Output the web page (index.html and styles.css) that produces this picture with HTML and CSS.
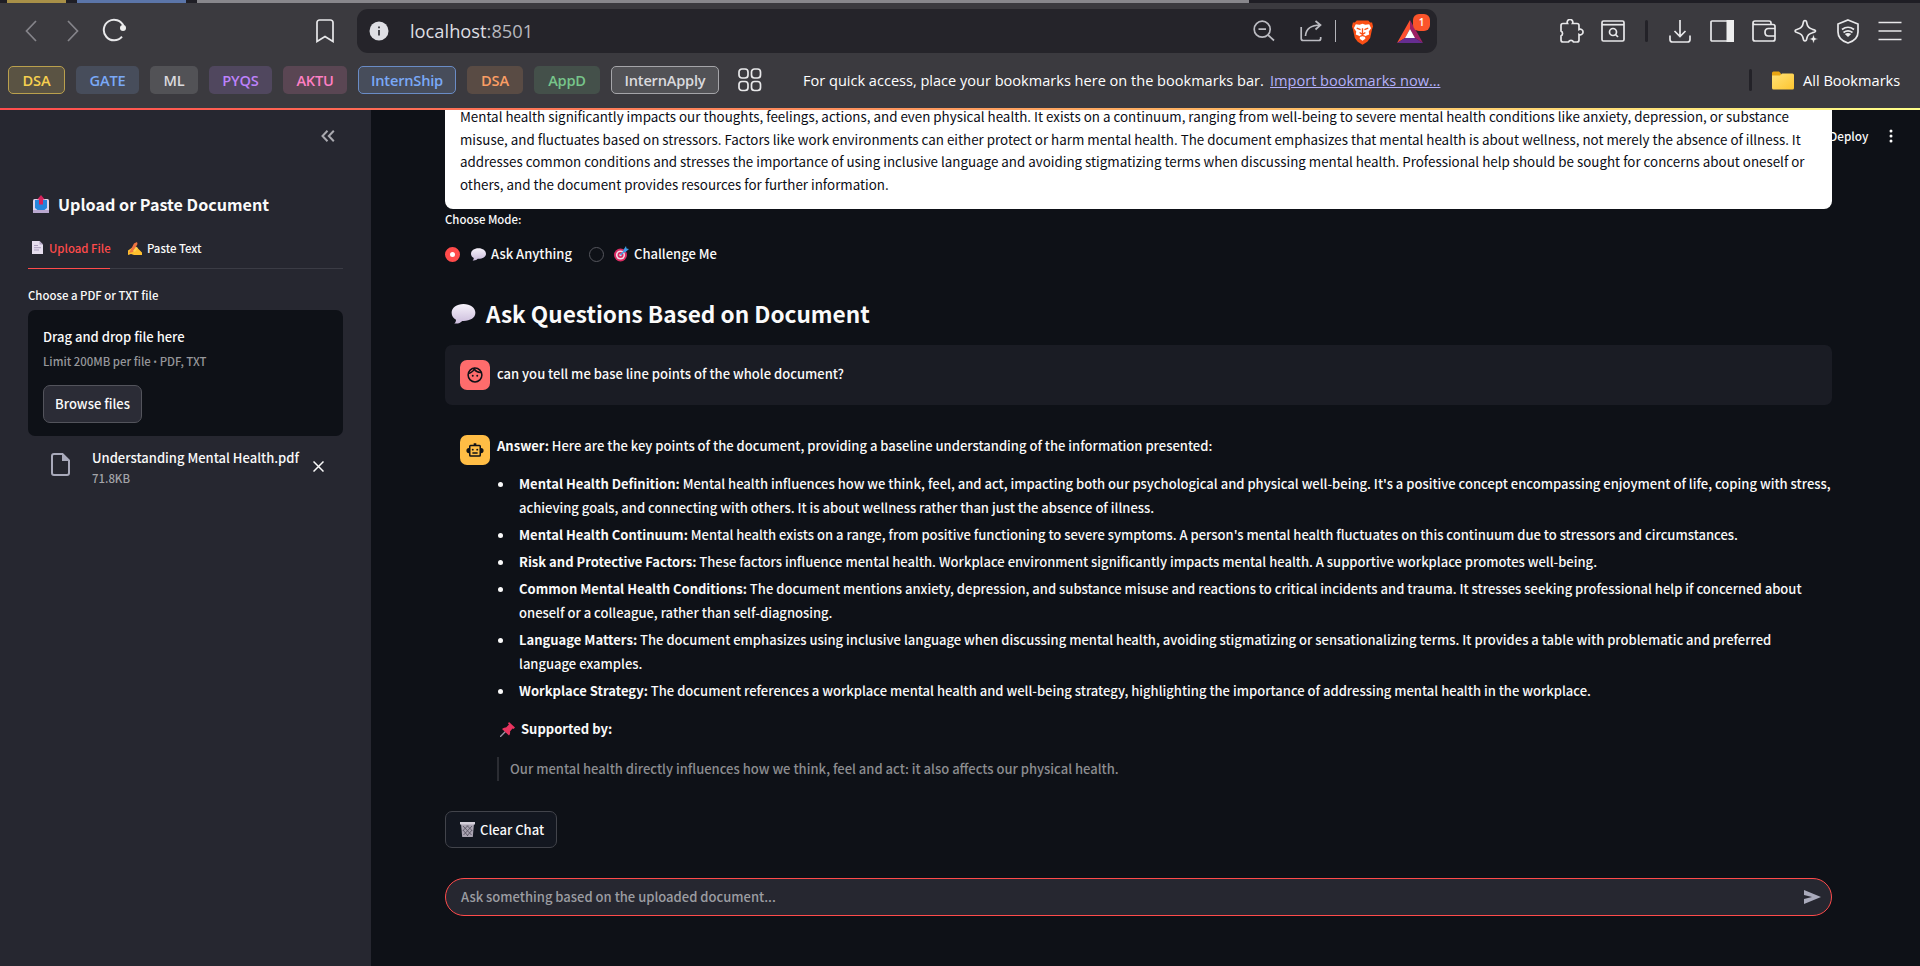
FILE: index.html
```
<!DOCTYPE html>
<html lang="en">
<head>
<meta charset="utf-8">
<title>localhost:8501</title>
<link rel="stylesheet" href="styles.css">
</head>
<body>
<header class="chrome">
  <div class="tabstrip"><i class="tab yellow"></i><i class="tab blue"></i><i class="tab gray"></i></div>
  <div class="toolbar">
    <div class="nav">
      <svg class="dim" width="12" height="22" viewBox="0 0 12 22"><path d="M11 1 1.500 11 11 21"/></svg>
      <svg class="dim fwd" width="12" height="22" viewBox="0 0 12 22"><path d="M1 1 10.500 11 1 21"/></svg>
      <svg class="reload" width="26" height="26" viewBox="0 0 26 26"><path d="M20 18.600A10.300 10.300 0 1 1 21.600 8"/><circle cx="21" cy="10" r="3" class="fill"/></svg>
      <svg class="mark" width="18" height="24" viewBox="0 0 18 24"><path d="M1 3.500A2.500 2.500 0 0 1 3.500 1h11A2.500 2.500 0 0 1 17 3.500V22.500L9 17.500 1 22.500Z"/></svg>
    </div>
    <div class="omnibox">
      <svg width="20" height="20" viewBox="0 0 20 20"><circle cx="10" cy="10" r="9.500" fill="#dfdfe4" stroke="none"/><path d="M10 9v5.500M10 5.500v1.800" stroke="#39393f" stroke-width="1.800"/></svg>
      <span class="url">localhost<span>:8501</span></span>
      <svg class="soft zoomout" width="22" height="22" viewBox="0 0 22 22"><circle cx="9.200" cy="9.200" r="8"/><path d="m15 15 6 5.500M5.500 9.200h7.500"/></svg>
      <svg class="soft share" width="23" height="22" viewBox="0 0 23 22"><path d="M1.200 7v11.500a2 2 0 0 0 2 2h15.500a2 2 0 0 0 2-2V17M5.500 16C6 9 10 5 20.500 5M15.500 1l5 4-5 4.500"/></svg>
      <i class="sep"></i>
      <svg class="brave" width="23" height="26" viewBox="0 0 24 26"><path d="M6 1h12l2 2 2 .2 1 4-1 3-2 9-3 4-5 3-5-3-3-4-2-9-1-3 1-4 2-.2Z" fill="#fb4f15" stroke="none"/><path d="m5 5 4 .5 3-1 3 1L19 5l2 4-2.500 3.500.5 3-4.500 2L15 20l-3 2.200L9 20l.5-2.500L5 15.500l.5-3L3 9Z" fill="#fff" stroke="none"/><path d="m6 9 4 1.500M18 9l-4 1.500M12 9v6m-3-1.500 3 2 3-2M9.500 17.500l2.500-1 2.500 1" stroke="#fb4f15" stroke-width="1.400"/></svg>
      <span class="bat"><svg width="26" height="23" viewBox="0 0 26 23"><g stroke="none"><path d="M13 0 0 23l8-5 5-9Z" fill="#ff5030"/><path d="m13 0 13 23-8-5-5-9Z" fill="#9e1f63"/><path d="M0 23h26l-8-5H8Z" fill="#662d91"/><path d="m13 9 5 9H8Z" fill="#fff"/></g></svg><b>1</b></span>
    </div>
    <div class="tools">
      <svg width="25" height="25" viewBox="0 0 25 25"><path d="M2 6.500Q2 4.500 4 4.500H8.500A2.800 2.800 0 1 1 13.500 4.500H18Q20 4.500 20 6.500V10.500A2.800 2.800 0 1 1 20 15.500V21Q20 23 18 23H14.500A2.800 2.800 0 0 0 9.500 23H4Q2 23 2 21V17A2.800 2.800 0 0 0 2 12Z"/></svg>
      <svg class="g1" width="24" height="22" viewBox="0 0 24 22"><rect x="1" y="1" width="22" height="20" rx="1.500"/><path d="M1 4.700h22"/><circle cx="12" cy="12" r="3.500"/><path d="m14.500 14.500 2.500 2.500"/></svg>
      <i class="bar"></i>
      <svg class="g2" width="22" height="23" viewBox="0 0 22 23"><path d="M11 0v16M5.500 11l5.500 5.500 5.500-5.500M1 15.500v4q0 2.500 2.500 2.500h15q2.500 0 2.500-2.500v-4"/></svg>
      <svg class="g3" width="24" height="22" viewBox="0 0 24 22"><rect x="1" y="1" width="22" height="20" rx="1"/><path d="M16.500 0H24v22h-7.500Z" fill="#eee" stroke="none"/></svg>
      <svg class="g4" width="24" height="22" viewBox="0 0 24 22"><path d="M19 4.500V3Q19 1 17 1H3Q1 1 1 3V19q0 2 2 2H21q2 0 2-2V6.500q0-2-2-2H3Q1 4.500 1 3M23 8.500H16.500Q13 8.500 13 12.300T16.500 16H23"/></svg>
      <svg class="g5" width="24" height="25" viewBox="0 0 24 25"><path d="M11 1.500Q12.500 1.500 12.800 4 13.500 9 18.500 10.300 21.500 11 21.500 12T18.500 13.700Q13.500 15 12.800 19.500 12.500 22 11 22T9.200 19.500Q8.500 15 3.500 13.700 1 13 1 12T3.500 10.300Q8.500 9 9.200 4 9.500 1.500 11 1.500Z"/><path d="m19.500 15 1.300 3.700 3.700 1.300-3.700 1.300-1.300 3.700-1.300-3.700-3.700-1.300 3.700-1.300Z" fill="#eee" stroke="#3b3a3f" stroke-width=".8"/></svg>
      <svg class="g6" width="22" height="25" viewBox="0 0 22 25"><path d="m11 1 10 4v8q0 8-10 11Q1 21 1 13V5Z"/><path d="M5 10.500q6-4.500 12 0M6.500 13.500q4.500-3.200 9 0"/><path d="M7.800 15q3.200-2 6.400 0L11 18Z" fill="#eee" stroke="none"/></svg>
      <svg class="g7" width="24" height="20" viewBox="0 0 24 20"><path d="M.5 1.500h23M.5 10h23M.5 18.500h23"/></svg>
    </div>
  </div>
  <div class="bookmarks">
    <span class="chip c-yellow ring">DSA</span><span class="chip c-blue w2">GATE</span><span class="chip c-gray w3">ML</span><span class="chip c-purple w4">PYQS</span><span class="chip c-pink w5">AKTU</span><span class="chip c-blue ring w6">InternShip</span><span class="chip c-orange w7">DSA</span><span class="chip c-green w8">AppD</span><span class="chip c-gray ring w9">InternApply</span>
    <svg class="grid" width="24" height="24" viewBox="0 0 24 24"><rect x="1" y="1" width="9" height="9" rx="3"/><rect x="13.500" y="1" width="9" height="9" rx="3"/><rect x="1" y="13.500" width="9" height="9" rx="3"/><rect x="13.500" y="13.500" width="9" height="9" rx="3"/></svg>
    <span class="hint">For quick access, place your bookmarks here on the bookmarks bar.</span>
    <a class="import">Import bookmarks now...</a>
    <i class="bar"></i>
    <svg class="folder" width="22" height="19" viewBox="0 0 22 19"><defs><linearGradient id="fg" x1="0" y1="0" x2="1" y2="1"><stop offset="0" stop-color="#ffe277"/><stop offset="1" stop-color="#fdc52f"/></linearGradient></defs><path d="M0 2Q0 .5 1.500.5H7l2 2v4H0Z" fill="#e8a512" stroke="none"/><path d="M0 4.500 8 4.500 10 2.500H20.500Q22 2.500 22 4V17Q22 18.500 20.500 18.500H1.500Q0 18.500 0 17Z" fill="url(#fg)" stroke="none"/></svg>
    <span class="all">All Bookmarks</span>
  </div>
</header>
<div class="app">
  <aside class="sidebar">
    <svg class="collapse" width="14" height="12" viewBox="0 0 14 12"><path d="M6.500.8 1.500 6l5 5.200M12.800.8 7.800 6l5 5.200"/></svg>
    <h3><svg width="16" height="18" viewBox="0 0 16 18"><rect y="4" width="16" height="14" rx="1.500" fill="#dcd4ea" stroke="none"/><path d="M2 5h12v8l-2.500 2h-7L2 13Z" fill="#2484dc" stroke="none"/><path d="M0 15h16v3H0Z" fill="#b9a8cf" stroke="none"/><path d="M8 0 11.800 4.500H10V9.500H6V4.500H4.200Z" fill="#d6245c" stroke="none"/></svg><span>Upload or Paste Document</span></h3>
    <div class="tabs">
      <span class="on"><svg width="11" height="13" viewBox="0 0 11 13"><path d="M0 0h7.500L11 3.500V13H0Z" fill="#e6deee" stroke="none"/><path d="M7.500 0v3.500H11Z" fill="#b3a6c4" stroke="none"/><path d="M2 4.500h4M2 6.700h7M2 9h5" stroke="#a496b8" stroke-width=".9"/></svg>Upload File</span>
      <span class="off"><svg width="14" height="13" viewBox="0 0 14 13"><path d="M0 13V8.500L5 5l3-.5 6 6V13H6l-3-1Z" fill="#ffbf2e" stroke="none"/><path d="M1 11 6 1.500 9 0l.5 2L5 10Z" fill="#ee7440" stroke="none"/><path d="m5 9 3-4 2 1-3 4Z" fill="#ffd34f" stroke="none"/></svg>Paste Text</span>
    </div>
    <label class="flabel">Choose a PDF or TXT file</label>
    <div class="drop">
      <p class="d1">Drag and drop file here</p>
      <p class="d2">Limit 200MB per file <span>•</span> PDF, TXT</p>
      <button class="browse">Browse files</button>
    </div>
    <div class="file">
      <svg width="19" height="23" viewBox="0 0 19 23"><path d="M3 1h8.500L18 7.500V20q0 2-2 2H3q-2 0-2-2V3q0-2 2-2Z" stroke="#a9aabb" stroke-width="2"/><path d="M11 1v7h7Z" fill="#a9aabb" stroke="none"/></svg>
      <div class="meta"><p class="name">Understanding Mental Health.pdf</p><p class="size">71.8KB</p></div>
      <svg class="x" width="11" height="11" viewBox="0 0 11 11"><path d="m.5.5 10 10m0-10-10 10" stroke="#fafafa" stroke-width="1.500"/></svg>
    </div>
  </aside>
  <main class="main">
    <div class="deploy"><span>Deploy</span><svg width="4" height="14" viewBox="0 0 4 14"><g fill="#fafafa" stroke="none"><circle cx="2" cy="2" r="1.500"/><circle cx="2" cy="7" r="1.500"/><circle cx="2" cy="12" r="1.500"/></g></svg></div>
    <section class="summary">
      <div>Mental health significantly impacts our thoughts, feelings, actions, and even physical health. It exists on a continuum, ranging from well-being to severe mental health conditions like anxiety, depression, or substance</div>
      <div>misuse, and fluctuates based on stressors. Factors like work environments can either protect or harm mental health. The document emphasizes that mental health is about wellness, not merely the absence of illness. It</div>
      <div>addresses common conditions and stresses the importance of using inclusive language and avoiding stigmatizing terms when discussing mental health. Professional help should be sought for concerns about oneself or</div>
      <div>others, and the document provides resources for further information.</div>
    </section>
    <div class="mode">Choose Mode:</div>
    <div class="radios">
      <i class="radio sel"></i>
      <svg class="e1" width="15" height="13" viewBox="0 0 38 32"><use href="#bubble"/></svg><span>Ask Anything</span>
      <i class="radio second"></i>
      <svg class="e2" width="15" height="16" viewBox="0 0 15 16"><g stroke="none"><circle cx="6.500" cy="9" r="6.500" fill="#d92b62"/><circle cx="6.500" cy="9" r="4.600" fill="#f4dbe8"/><circle cx="6.500" cy="9" r="3" fill="#d92b62"/><circle cx="6.500" cy="9" r="1.200" fill="#f4dbe8"/></g><path d="m6.500 9 6-6" stroke="#3e9ce6" stroke-width="1.500"/><path d="M9 4.500 12 0l.5 2.500L15 3l-4 3.500Z" fill="#3e9ce6" stroke="none"/></svg><span>Challenge Me</span>
    </div>
    <h2><svg width="25" height="20" viewBox="0 0 38 32"><defs><linearGradient id="bg" x1="0" y1="0" x2="0" y2="1"><stop offset="0" stop-color="#f6f2fa"/><stop offset="1" stop-color="#cbbcdc"/></linearGradient></defs><path id="bubble" d="M19 0C8 0 0 6 0 14c0 5 3 9 7 11 0 3-1 5-3 6 6 1 10-1 13-4h2c11 0 19-5 19-13S30 0 19 0Z" fill="url(#bg)" stroke="none"/></svg><span>Ask Questions Based on Document</span></h2>
    <section class="msg user">
      <span class="avatar"><svg width="18" height="18" viewBox="0 0 24 24"><circle cx="12" cy="12" r="9.200" stroke="#0e1117" stroke-width="2"/><path d="M3 10q6-1.500 8-6 3 5 9.500 4.500" stroke="#0e1117" stroke-width="2"/><circle cx="9" cy="13" r="1.300" fill="#0e1117" stroke="none"/><circle cx="15" cy="13" r="1.300" fill="#0e1117" stroke="none"/></svg></span>
      <p>can you tell me base line points of the whole document?</p>
    </section>
    <section class="msg bot">
      <span class="avatar"><svg width="18" height="18" viewBox="0 0 24 24"><rect x="5" y="6" width="14" height="14" rx="1" stroke="#0e1117" stroke-width="2"/><path d="M12 6V3" stroke="#0e1117" stroke-width="3.500"/><path d="M4 10.200a2.600 2.600 0 0 0 0 5.200ZM20 10.200a2.600 2.600 0 0 1 0 5.200Z" fill="#0e1117" stroke="#0e1117"/><path d="M8.500 16h7" stroke="#0e1117" stroke-width="2"/><circle cx="9" cy="11.500" r="1.300" fill="#0e1117" stroke="none"/><circle cx="15" cy="11.500" r="1.300" fill="#0e1117" stroke="none"/></svg></span>
      <div class="body">
        <p><b>Answer:</b> Here are the key points of the document, providing a baseline understanding of the information presented:</p>
        <ul>
          <li><b>Mental Health Definition:</b> Mental health influences how we think, feel, and act, impacting both our psychological and physical well-being. It's a positive concept encompassing enjoyment of life, coping with stress,<br>achieving goals, and connecting with others. It is about wellness rather than just the absence of illness.</li>
          <li><b>Mental Health Continuum:</b> Mental health exists on a range, from positive functioning to severe symptoms. A person's mental health fluctuates on this continuum due to stressors and circumstances.</li>
          <li><b>Risk and Protective Factors:</b> These factors influence mental health. Workplace environment significantly impacts mental health. A supportive workplace promotes well-being.</li>
          <li><b>Common Mental Health Conditions:</b> The document mentions anxiety, depression, and substance misuse and reactions to critical incidents and trauma. It stresses seeking professional help if concerned about<br>oneself or a colleague, rather than self-diagnosing.</li>
          <li><b>Language Matters:</b> The document emphasizes using inclusive language when discussing mental health, avoiding stigmatizing or sensationalizing terms. It provides a table with problematic and preferred<br>language examples.</li>
          <li><b>Workplace Strategy:</b> The document references a workplace mental health and well-being strategy, highlighting the importance of addressing mental health in the workplace.</li>
        </ul>
        <p class="support"><svg width="15" height="15" viewBox="0 0 15 15"><path d="m0 15 6-6" stroke="#9b93a5" stroke-width="1.300"/><path d="M9 0 15 5.500 13.500 7 12.500 6.500 10 9.500Q10.500 12 9 13.500L2 7Q4 5 6 5.500L9 2.500 8 1.500Z" fill="#e8345f" stroke="none"/></svg><b>Supported by:</b></p>
        <blockquote>Our mental health directly influences how we think, feel and act: it also affects our physical health.</blockquote>
      </div>
    </section>
    <button class="clear"><svg width="15" height="15" viewBox="0 0 15 15"><path d="M1 1.500h13L12.800 15H2.200Z" fill="#aaa4b2" stroke="none"/><path d="M0 0h15v2.500H0Z" fill="#d4cfda" stroke="none"/><path d="m3 4 8.500 9M7 3.500l5 5M3 8l5 6M12 4l-8.500 9M8 3.500l-5 5M12 8l-5 6" stroke="#514c5b" stroke-width=".8"/></svg><span>Clear Chat</span></button>
    <div class="ask"><span>Ask something based on the uploaded document...</span><svg width="17" height="14" viewBox="0 0 17 14"><path d="M0 0 17 7 0 14V9l8-2-8-2Z" fill="#a9aabb" stroke="none"/></svg></div>
  </main>
</div>
</body>
</html>
```
FILE: styles.css
```
*{box-sizing:border-box}
body{margin:0;width:1920px;height:966px;overflow:hidden;background:#0e1117;color:#fafafa;font-family:"Noto Sans CJK SC","Noto Sans",sans-serif;font-size:13.03px;font-weight:500}
p,h2,h3,ul,blockquote{margin:0;padding:0}
svg{fill:none;stroke:#e8e8ea;stroke-width:1.7;display:block;flex:none}
svg .fill{fill:#eee;stroke:none}
button{font:inherit;color:inherit}

.chrome{height:110px;background:#3b3a3f;border-bottom:2px solid;border-image:linear-gradient(90deg,#ff4d4d,#ff8a5c 40%,#ffb965 65%,#ffff8a) 1;font-family:"Open Sans","Noto Sans",sans-serif;font-weight:400}
.tabstrip{height:3px;background:#1f1e25;display:flex;padding-left:7px}
.tab{height:3px}
.yellow{width:59px;background:#a89048}
.blue{width:109px;margin-left:11px;background:#5b75a9}
.gray{width:1052px;margin-left:11px;background:#88878c}
.toolbar{height:56px;display:flex;align-items:center}
.nav{width:357px;display:flex;align-items:center;padding-left:25px}
.dim{stroke:#85848a}
.fwd{margin-left:30px}
.reload{margin-left:23px;stroke-width:2}
.mark{margin-left:188px}
.omnibox{width:1080px;height:44px;background:#25242a;border-radius:11px;display:flex;align-items:center;padding-left:12px}
.url{font-size:18.3px;margin-left:21px;width:829px;color:#dedee2;line-height:24px}
.url span{color:#b8b8be}
.soft{stroke:#bcbcc2}
.zoomout{margin-left:14px}
.share{margin-left:25px}
.sep{width:1px;height:22px;margin-left:12px;background:#b4b4ba}
.brave{margin-left:15px;margin-top:2px}
.bat{margin-left:23px;position:relative;padding-top:1px}
.bat b{position:absolute;left:16px;top:-5px;width:17px;height:17px;border-radius:6px;background:#fb542b;color:#fff;font-size:10px;line-height:17px;text-align:center;font-weight:600}
.tools{display:flex;align-items:center;padding-left:122px}
.bar{width:3px;height:22px;border-radius:2px;background:#232228}
.g1{margin-left:17px}
.tools .bar{margin-left:20px}
.g2{margin-left:21px}
.g3{margin-left:19px}
.g4{margin-left:18px}
.g5{margin-left:18px}
.g6{margin-left:19px}
.g7{margin-left:19px}
.bookmarks{height:42px;display:flex;align-items:center;padding-left:8px}
.chip{height:28px;width:57px;border-radius:5px;display:flex;align-items:center;justify-content:center;font-size:14.6px;font-weight:600;letter-spacing:-.2px;margin-right:11px;padding-bottom:1px;border:1px solid transparent}
.c-yellow{background:#5a5343;color:#f7d04f}
.c-blue{background:#474d5b;color:#7aa9f7}
.c-gray{background:#525256;color:#dadade}
.c-purple{background:#50475e;color:#bd82fb}
.c-pink{background:#5a4653;color:#ff7fc4}
.c-orange{background:#594b44;color:#fb9e64}
.c-green{background:#44504a;color:#77c58a}
.ring{border:1px solid currentColor}
.c-yellow.ring{border-color:#baa04d}.c-blue.ring{border-color:#6a8cc6}.c-gray.ring{border-color:#a5a5a9}
.w2{width:63px}.w3{width:48px}.w4{width:63px}.w5{width:64px}.w6{width:98px}.w7{width:56px}.w8{width:66px}.w9{width:108px}
.grid{margin-left:8px}
.hint,.import,.all{padding-bottom:1px}
.hint{font-size:14.55px;margin-left:41px;width:459px;white-space:nowrap;color:#fff}
.import{font-size:14.55px;width:169px;margin-left:8px;white-space:nowrap;color:#b4b0fb;text-decoration:underline}
.bookmarks .bar{margin-left:310px}
.folder{margin-left:20px}
.all{font-size:14.6px;margin-left:9px;white-space:nowrap;color:#fff}

.app{display:flex;height:856px}
.sidebar{width:371px;background:#262730;padding:0 28px}
.collapse{margin:20px 0 0 293px;stroke:#a9a9af;stroke-width:2}
h3{display:flex;align-items:center;height:30px;margin-top:47px;padding-left:5px;font-size:16.15px;font-weight:700;white-space:nowrap}
h3 span{margin-left:9px}
.tabs{display:flex;height:41px;margin-top:9px;border-bottom:1px solid #3b3c45;font-size:11.4px;white-space:nowrap}
.tabs span{display:flex;align-items:center;height:41px;padding-bottom:1px}
.on{width:82px;padding-left:4px;color:#ff4b4b;border-bottom:1px solid #ff4b4b}
.on svg{margin-right:6px}
.off{margin-left:18px}
.off svg{margin-right:5px}
.flabel{display:block;margin-top:16px;height:20px;line-height:20px;font-size:11.4px}
.drop{height:126px;margin-top:5px;border-radius:7px;background:#0e1117;padding:15px}
.d1{line-height:24px}
.d2{line-height:20px;margin-top:2px;font-size:11.4px;color:#96979b}
.d2 span{font-family:"Open Sans",sans-serif;font-size:10px}
.browse{display:block;width:99px;height:38px;margin-top:13px;padding:0 0 2px;border:1px solid #53545c;border-radius:7px;background:#2b2c36}
.file{display:flex;padding:11px 0 0 23px}
.file>svg:first-child{margin-top:6px}
.meta{margin-left:22px;width:221px;white-space:nowrap}
.name{line-height:22px}
.size{line-height:18px;font-size:11.4px;color:#a3a4a9}
.x{margin-top:14px}

.main{flex:1;padding-left:74px;position:relative;white-space:nowrap}
.deploy{position:absolute;left:1458px;top:16px;width:64px;display:flex;align-items:center;justify-content:space-between;font-size:11.8px;line-height:20px}
.summary{position:relative;width:1387px;height:99px;background:#fff;color:#0b0d14;border-radius:0 0 8px 8px;padding:0 15px 14px;display:flex;flex-direction:column;justify-content:flex-end;font-weight:400;font-size:13.37px}
.summary div{line-height:22.5px;flex:none}
.mode{line-height:20px;font-size:11.4px}
.radios{display:flex;align-items:center;height:24px;margin-top:13px}
.radio{width:15px;height:15px;border-radius:50%;border:1px solid #55565d}
.sel{border:5px solid #ff4b4b;background:#fff}
.e1{margin-left:11px}
.e2{margin-left:10px}
.radios span{margin-left:5px;padding-bottom:2px}
.second{margin-left:17px}
h2{display:flex;align-items:center;height:40px;margin:28px 0 0;padding-left:6px;font-size:22.6px;font-weight:700}
h2 span{margin-left:10px;padding-bottom:2px}
.msg{display:flex;width:1387px;padding:15px 0 0 15px;border-radius:7px}
.user{height:60px;margin-top:11px;background:#1a1c24}
.user p{line-height:28px}
.avatar{width:30px;height:30px;border-radius:7px;background:#ff6c6c;display:flex;align-items:center;justify-content:center;margin-right:7px;flex:none}
.bot{margin-top:15px}
.bot .avatar{background:#ffbd45}
.body{margin-top:-1px}
.body p{line-height:24px}
ul{list-style:none;margin-top:14px}
li{position:relative;padding-left:22px;line-height:24px;margin-bottom:3px}
li::before{content:"";position:absolute;left:1px;top:10px;width:5px;height:5px;border-radius:50%;background:#fafafa}
b{font-weight:700}
.support{display:flex;align-items:center;height:24px;margin-top:14px;padding-left:3px}
.support svg{margin-right:6px}
blockquote{margin-top:16px;height:24px;line-height:24px;border-left:2px solid #2b2d33;padding-left:11px;color:#8c8d90}
.clear{display:flex;align-items:center;width:112px;height:37px;margin-top:30px;padding:0 0 0 14px;border:1px solid #42444b;border-radius:7px;background:#131720}
.clear svg{margin-right:5px}
.clear span,.ask span{padding-bottom:1px}
.ask{display:flex;align-items:center;justify-content:space-between;width:1387px;height:38px;margin-top:30px;padding:0 10px 0 15px;border:1px solid #ff4b4b;border-radius:19px;background:#262730;color:#9c9da2}
```
